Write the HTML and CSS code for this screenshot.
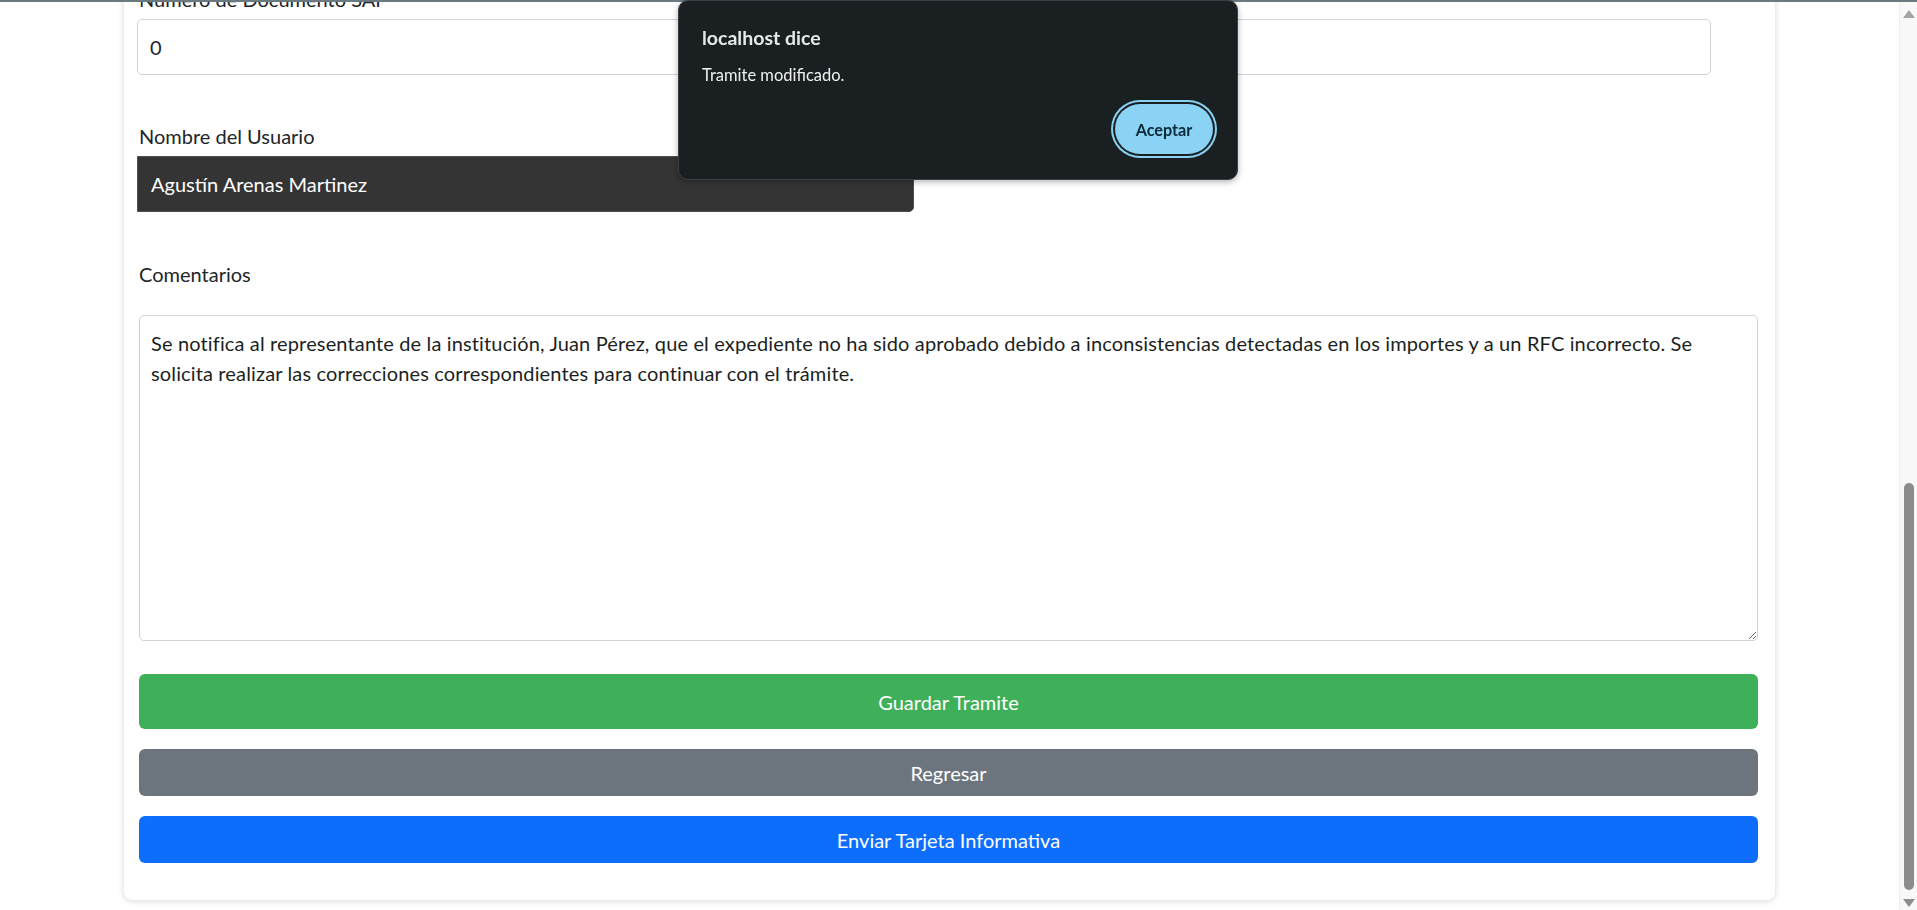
FILE: index.html
```html
<!DOCTYPE html>
<html lang="es">
<head>
<meta charset="utf-8">
<title>Editar Tramite</title>
<link rel="stylesheet" href="styles.css">
</head>
<body>
<div class="topbar"></div>
<div class="screen">
  <main class="page">
    <section class="card">
      <div class="top-fields">
        <label class="field-label">Número de Documento SAP</label>
        <input class="field-input" type="text" value="0">
        <label class="field-label lbl-gap">Nombre del Usuario</label>
        <input class="field-dark" type="text" value="Agustín Arenas Martinez" readonly>
      </div>
      <label class="field-label comments-label">Comentarios</label>
      <textarea class="comments">Se notifica al representante de la institución, Juan Pérez, que el expediente no ha sido aprobado debido a inconsistencias detectadas en los importes y a un RFC incorrecto. Se solicita realizar las correcciones correspondientes para continuar con el trámite.</textarea>
      <div class="actions">
        <button class="btn btn-success" type="button">Guardar Tramite</button>
        <button class="btn btn-secondary" type="button">Regresar</button>
        <button class="btn btn-primary" type="button">Enviar Tarjeta Informativa</button>
      </div>
    </section>
  </main>
  <div class="scrollbar">
    <div class="sb-btn"><span class="arrow-up"></span></div>
    <div class="sb-track"><div class="sb-thumb"></div></div>
    <div class="sb-btn"><span class="arrow-down"></span></div>
  </div>
</div>
<div class="dialog" role="alertdialog">
  <div class="dlg-title">localhost dice</div>
  <div class="dlg-msg">Tramite modificado.</div>
  <div class="dlg-actions"><button class="dlg-btn" type="button">Aceptar</button></div>
</div>
</body>
</html>
```
FILE: styles.css
```css
* { box-sizing: border-box; }
html, body {
  margin: 0;
  height: 100%;
  overflow: hidden;
  background: #fff;
}
body {
  font-family: Lato, "Open Sans", sans-serif;
  font-size: 20px;
  line-height: 30px;
  color: #212529;
}
.topbar {
  height: 2px;
  background: #6b7a81;
}
.screen {
  display: flex;
  height: 908px;
}
.page {
  flex: 1;
  min-width: 0;
  padding: 0 124px;
  overflow: hidden;
}
.card {
  margin-top: -38px;
  padding: 20px 17px 37px 15px;
  background: #fff;
  border-radius: 8px;
  box-shadow: 0 1px 6px rgba(0, 0, 0, 0.16);
}
.top-fields {
  display: flex;
  flex-direction: column;
  align-items: flex-start;
  margin-left: -2px;
}
.top-fields .field-label { padding-left: 2px; }
.field-label {
  display: block;
  margin-bottom: 5px;
}
.lbl-gap { margin-top: 46px; }
.field-input {
  width: 1574px;
  height: 56px;
  padding: 0 12px;
  border: 1px solid #ced4da;
  border-radius: 5px;
  background: #fff;
  color: #212529;
  font-family: Lato, "Open Sans", sans-serif;
  font-size: 20px;
  outline: none;
}
.field-dark {
  width: 777px;
  height: 56px;
  padding: 0 13px;
  border: 1px solid #4f4f4f;
  border-radius: 0 5px 5px 0;
  background: #343434;
  color: #fff;
  font-family: Lato, "Open Sans", sans-serif;
  font-size: 20px;
  outline: none;
}
.comments-label {
  margin-top: 47px;
  margin-bottom: 26px;
}
.comments {
  display: block;
  width: 100%;
  height: 326px;
  padding: 12px 11px;
  border: 1px solid #ced4da;
  border-radius: 5px;
  color: #1c1f22;
  font-family: Lato, "Open Sans", sans-serif;
  font-size: 20px;
  line-height: 30px;
  letter-spacing: 0.14px;
  resize: vertical;
  outline: none;
}
.actions {
  display: flex;
  flex-direction: column;
  gap: 20px;
  margin-top: 33px;
}
.btn {
  height: 47px;
  border: none;
  border-radius: 6px;
  color: #fff;
  font-family: Lato, "Open Sans", sans-serif;
  font-size: 20px;
  line-height: 30px;
}
.btn-success { height: 55px; background: #3fb05a; }
.btn-secondary { background: #6c757d; }
.btn-primary { background: #0d6efd; }

.scrollbar {
  width: 18px;
  flex: none;
  display: flex;
  flex-direction: column;
  background: #f8f8f8;
  border-left: 1px solid #eeeeee;
}
.sb-btn {
  height: 17px;
  display: flex;
  align-items: center;
  justify-content: center;
}
.arrow-up {
  width: 0; height: 0;
  border-left: 6px solid transparent;
  border-right: 6px solid transparent;
  border-bottom: 8px solid #a3a3a3;
  margin-top: 6px;
}
.arrow-down {
  width: 0; height: 0;
  border-left: 6px solid transparent;
  border-right: 6px solid transparent;
  border-top: 8px solid #8d8d8d;
  margin-top: 2px;
}
.sb-track {
  flex: 1;
  display: flex;
  flex-direction: column;
  align-items: center;
}
.sb-thumb {
  width: 10px;
  height: 407px;
  margin-top: 464px;
  background: #8c8c8c;
  border-radius: 5px;
}

.dialog {
  position: fixed;
  left: 678px;
  top: 0;
  width: 560px;
  height: 180px;
  padding: 24px 24px 24px 23px;
  background: #1a1f22;
  border: 1px solid #3b4044;
  border-radius: 10px;
  box-shadow: 0 2px 6px rgba(0, 0, 0, 0.3);
  color: #e6e8ea;
  font-family: Lato, "Open Sans", sans-serif;
  z-index: 10;
}
.dlg-title {
  font-size: 19.5px;
  line-height: 26px;
  font-weight: 700;
}
.dlg-msg {
  margin-top: 14px;
  font-size: 16.5px;
  line-height: 21px;
  color: #eef0f2;
}
.dlg-actions {
  display: flex;
  justify-content: flex-end;
  margin-top: 18px;
}
.dlg-btn {
  width: 98px;
  height: 50px;
  border: none;
  border-radius: 25px;
  background: #8bd3f4;
  color: #0b2a38;
  font-family: Lato, "Open Sans", sans-serif;
  font-size: 16.2px;
  font-weight: 700;
  box-shadow: 0 0 0 2px #1a1f22, 0 0 0 4px #8bd3f4;
}
```
